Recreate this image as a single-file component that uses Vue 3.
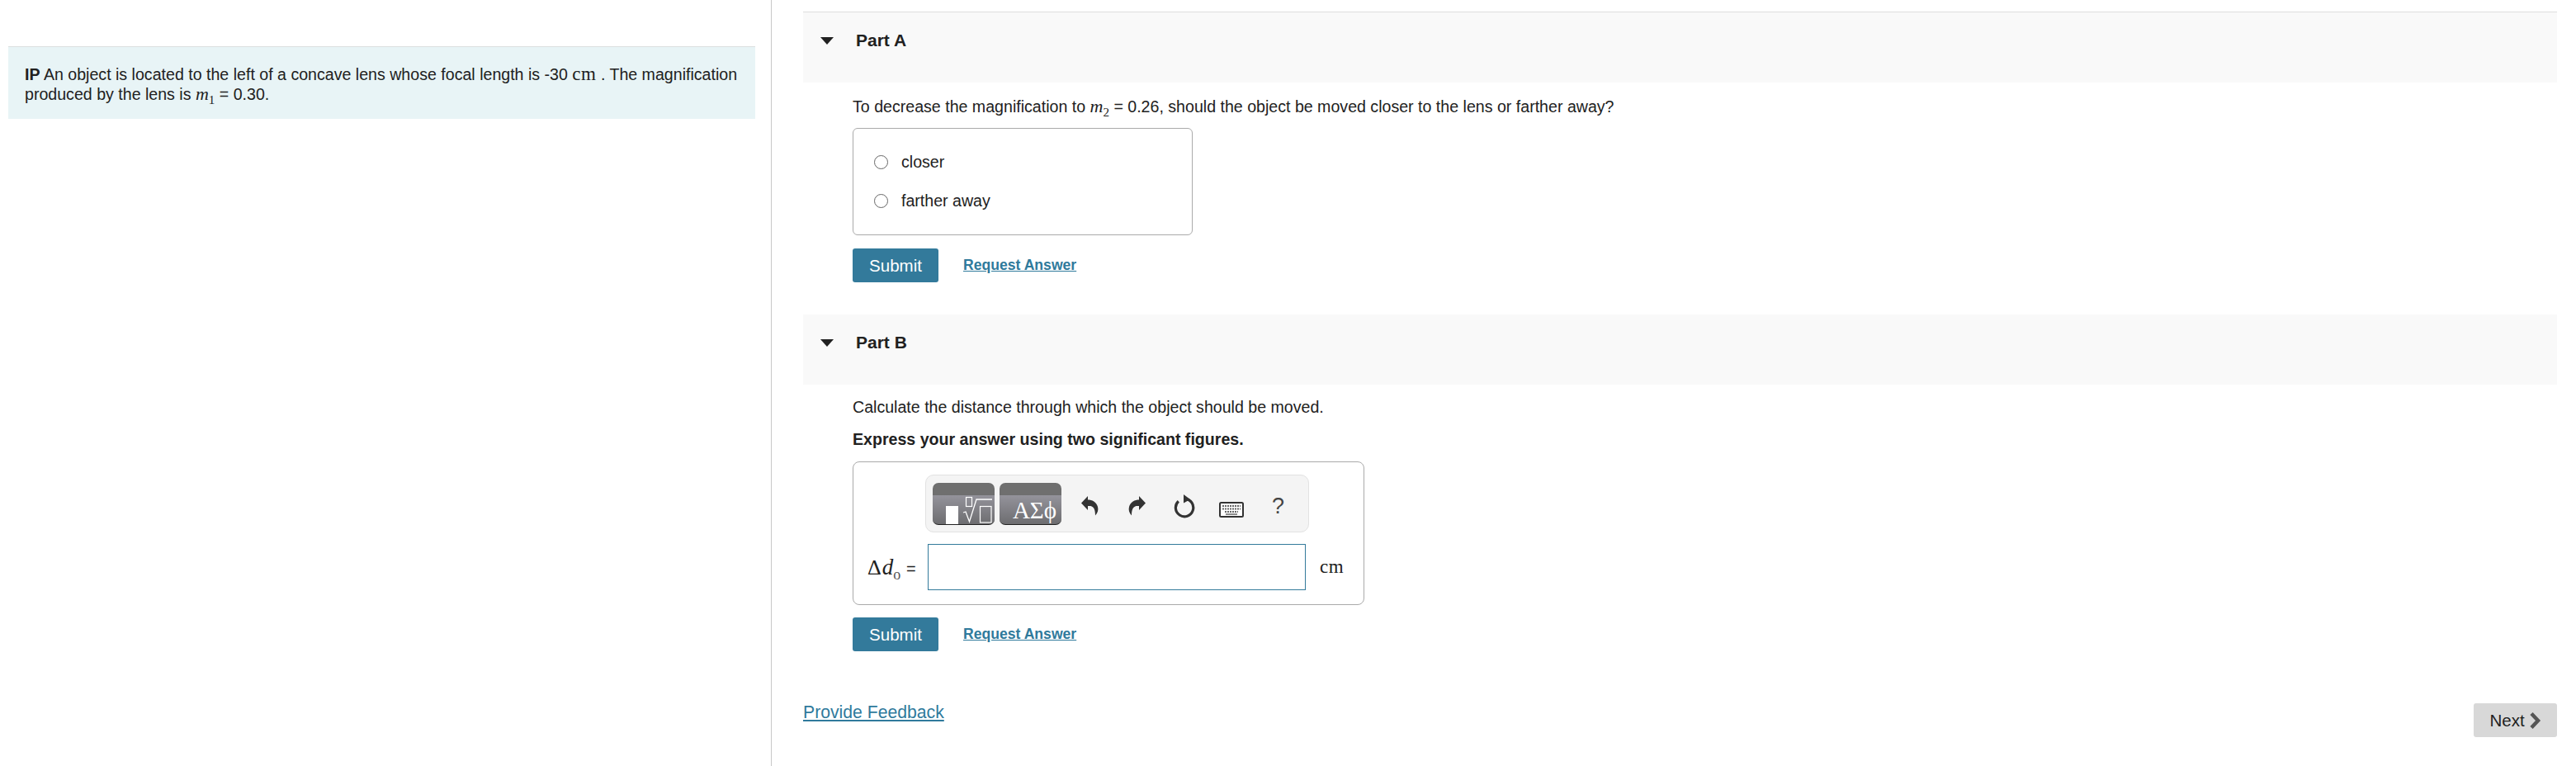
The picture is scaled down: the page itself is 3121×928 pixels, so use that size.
<script setup>
const options = ['closer', 'farther away']
</script>

<template>
  <div class="page">
    <aside class="left">
      <div class="intro">
        <p><b>IP</b> An object is located to the left of a concave lens whose focal length is -30 <span class="rm">cm</span> . The magnification produced by the lens is <span class="math"><i>m</i><sub>1</sub></span> = 0.30.</p>
      </div>
    </aside>
    <main class="right">
      <section class="part">
        <header class="head"><span class="tri"></span><h2>Part A</h2></header>
        <div class="body">
          <p class="q first">To decrease the magnification to <span class="math"><i>m</i><sub>2</sub></span> = 0.26, should the object be moved closer to the lens or farther away?</p>
          <div class="choices">
            <label v-for="o in options" :key="o" class="choice"><span class="radio"></span>{{ o }}</label>
          </div>
          <div class="actions">
            <button class="submit">Submit</button>
            <a class="req">Request Answer</a>
          </div>
        </div>
      </section>
      <section class="part partb">
        <header class="head"><span class="tri"></span><h2>Part B</h2></header>
        <div class="body">
          <p class="q calc">Calculate the distance through which the object should be moved.</p>
          <p class="q express"><b>Express your answer using two significant figures.</b></p>
          <div class="answer">
            <div class="toolbar">
              <div class="tbtn">
                <svg width="75" height="51" viewBox="0 0 75 51">
                  <rect x="16" y="29" width="15" height="22" fill="#fff"/>
                  <rect x="40.500" y="18.500" width="7" height="11" fill="none" stroke="#fff" stroke-width="1.200"/>
                  <path d="M37 37l3-1 4.500 12 8.500-27h19" fill="none" stroke="#fff" stroke-width="1.300"/>
                  <rect x="57.500" y="29.500" width="13.500" height="19.500" fill="none" stroke="#fff" stroke-width="1.200"/>
                </svg>
              </div>
              <div class="tbtn greek">ΑΣϕ</div>
              <span class="slot">
                <svg width="21" height="24" viewBox="0 0 21 24"><path d="M8 0 0 8.500 8 17v-5c5-.5 9 .5 9 11.500 3-3.500 4-6.500 3-10.500C18.500 7 13 4.500 8 4.500z" fill="#333"/></svg>
              </span>
              <span class="slot">
                <svg width="21" height="24" viewBox="0 0 21 24"><path d="M13 0l8 8.500-8 8.500v-5c-5-.5-9 .5-9 11.500-3-3.500-4-6.500-3-10.500C2.500 7 8 4.500 13 4.500z" fill="#333"/></svg>
              </span>
              <span class="slot">
                <svg width="28" height="30" viewBox="0 0 28 30"><path d="M15 6.400a10.700 10.700 0 1 1-8.200 2.800" fill="none" stroke="#333" stroke-width="3.200"/><path d="M13 1l8 6-8 4.500z" fill="#333"/></svg>
              </span>
              <span class="slot keys">
                <svg width="30" height="19" viewBox="0 0 30 19"><rect x="1" y="1" width="28" height="17" rx="1.500" fill="#fff" stroke="#333" stroke-width="2"/><path d="M4 5h22M4 8.500h22" stroke="#666" stroke-width="2" stroke-dasharray="2 1"/><path d="M7 12h16" stroke="#666" stroke-width="2" stroke-dasharray="2 1"/><path d="M8 15h14" stroke="#666" stroke-width="1.500"/></svg>
              </span>
              <span class="slot help">?</span>
            </div>
            <div class="entry">
              <span class="symbol"><span class="rm">Δ</span><i>d</i><sub>o</sub> <span class="eq">=</span></span>
              <input class="field" type="text" />
              <span class="unit">cm</span>
            </div>
          </div>
          <div class="actions second">
            <button class="submit">Submit</button>
            <a class="req">Request Answer</a>
          </div>
        </div>
      </section>
      <footer class="foot">
        <a class="feedback">Provide Feedback</a>
        <button class="next">Next
          <svg width="15" height="22" viewBox="0 0 15 22"><path d="M3 2.500l8 8.500-8 8.500" fill="none" stroke="#555" stroke-width="4.500"/></svg>
        </button>
      </footer>
    </main>
  </div>
</template>

<style>
html, body { margin: 0; background: #fff; }
</style>

<style scoped>
.page {
  display: flex;
  height: 928px;
  font-family: "Liberation Sans", Arial, sans-serif;
  font-size: 19.600px;
  color: #212121;
  overflow: hidden;
}
.left {
  width: 935px;
  flex: none;
  box-sizing: border-box;
  border-right: 1px solid #c8c8c8;
  padding: 56px 0 0 10px;
}
.intro {
  width: 905px;
  box-sizing: border-box;
  height: 88px;
  background: #e8f4f6;
  border-top: 1px solid #dcdfe0;
  padding: 21px 8px 0 20px;
  line-height: 24px;
}
.intro p { margin: 0; }
.rm { font-family: "Liberation Serif", serif; font-size: 23px; letter-spacing: 0.500px; line-height: 0; }
.math { font-family: "Liberation Serif", serif; font-size: 22px; line-height: 0; }
.math sub, .symbol sub { font-size: 15px; line-height: 0; }
.right {
  flex: 1;
  min-width: 0;
  padding: 14px 23px 0 38px;
}
.part { border-top: 1px solid #dedede; }
.partb { border-top: 0; margin-top: 39px; }
.head {
  height: 85px;
  background: #f9f9f9;
  display: flex;
  align-items: flex-start;
  padding-left: 21px;
}
.tri {
  width: 0;
  height: 0;
  margin-top: 30px;
  border-left: 8px solid transparent;
  border-right: 8px solid transparent;
  border-top: 9px solid #212121;
}
.head h2 {
  margin: 22px 0 0 27px;
  font-size: 21px;
  line-height: 24px;
  font-weight: 700;
}
.body { padding-left: 60px; }
.q { margin: 0; line-height: 24px; }
.first { padding-top: 17px; }
.calc { padding-top: 15px; }
.express { margin-top: 15px; }
.choices {
  width: 412px;
  height: 130px;
  box-sizing: border-box;
  margin-top: 14px;
  border: 1px solid #aaa;
  border-radius: 6px;
  padding: 17px 0 0 25px;
}
.choice {
  display: flex;
  align-items: center;
  height: 47px;
  gap: 16px;
}
.radio {
  width: 15px;
  height: 15px;
  border: 1.500px solid #666;
  border-radius: 50%;
}
.actions {
  display: flex;
  align-items: center;
  margin-top: 16px;
  gap: 30px;
}
.actions.second { margin-top: 15px; }
.submit {
  width: 104px;
  height: 41px;
  border: 0;
  border-radius: 3px;
  background: #337a9b;
  color: #fff;
  font: 20.500px "Liberation Sans", Arial, sans-serif;
  padding: 0;
}
.req {
  color: #2f7a9c;
  font-size: 17.600px;
  font-weight: 700;
  text-decoration: underline;
  margin-top: -1px;
}
.answer {
  width: 620px;
  height: 174px;
  box-sizing: border-box;
  margin-top: 15px;
  border: 1px solid #aaa;
  border-radius: 8px;
  padding: 15px 0 0 87px;
}
.toolbar {
  width: 465px;
  height: 70px;
  box-sizing: border-box;
  display: flex;
  align-items: center;
  padding: 0 0 0 8px;
  background: #f4f4f4;
  border: 1px solid #e2e2e2;
  border-radius: 10px;
}
.tbtn {
  width: 75px;
  height: 51px;
  box-sizing: border-box;
  margin-right: 6px;
  border-radius: 7px;
  border-bottom: 1px solid #222;
  background: linear-gradient(#6f6f6f 0, #6f6f6f 15px, #94939b 15px, #6d6d70 100%);
  display: flex;
  align-items: flex-end;
  overflow: hidden;
}
.greek {
  color: #fff;
  font: 29px/34px "Liberation Serif", serif;
  justify-content: flex-end;
  padding: 0 6px 0 0;
}
.slot {
  width: 57px;
  display: flex;
  justify-content: center;
  color: #333;
  padding-top: 6px;
}
.keys { padding-top: 14px; }
.help { font-size: 27px; line-height: 30px; color: #444; }
.entry {
  display: flex;
  align-items: center;
  margin-top: 14px;
  margin-left: -69px;
}
.symbol {
  width: 72px;
  flex: none;
  font: italic 27px "Liberation Serif", serif;
  white-space: nowrap;
  margin-left: -1px;
  margin-right: 1px;
}
.symbol .rm { font-style: normal; font-size: 26px; letter-spacing: 1px; }
.symbol sub { color: #555; font-style: normal; font-size: 18px; }
.eq { font-style: normal; font-size: 20px; font-family: "Liberation Sans", sans-serif; }
.field {
  width: 458px;
  height: 56px;
  box-sizing: border-box;
  border: 1px solid #337a9b;
  border-radius: 0;
  padding: 0;
  outline: none;
  background: #fff;
}
.unit {
  margin-left: 17px;
  font-family: "Liberation Serif", serif;
  font-size: 23px;
  letter-spacing: 0.500px;
}
.foot {
  display: flex;
  justify-content: space-between;
  align-items: flex-start;
  margin-top: 63px;
}
.feedback {
  color: #2f7a9c;
  font-size: 21.200px;
  line-height: 22px;
  text-decoration: underline;
}
.next {
  width: 101px;
  height: 41px;
  border: 0;
  border-radius: 3px;
  background: #d8d8d8;
  color: #212121;
  font: 20.500px "Liberation Sans", Arial, sans-serif;
  display: flex;
  align-items: center;
  justify-content: center;
  gap: 5px;
  padding: 0;
}
</style>
